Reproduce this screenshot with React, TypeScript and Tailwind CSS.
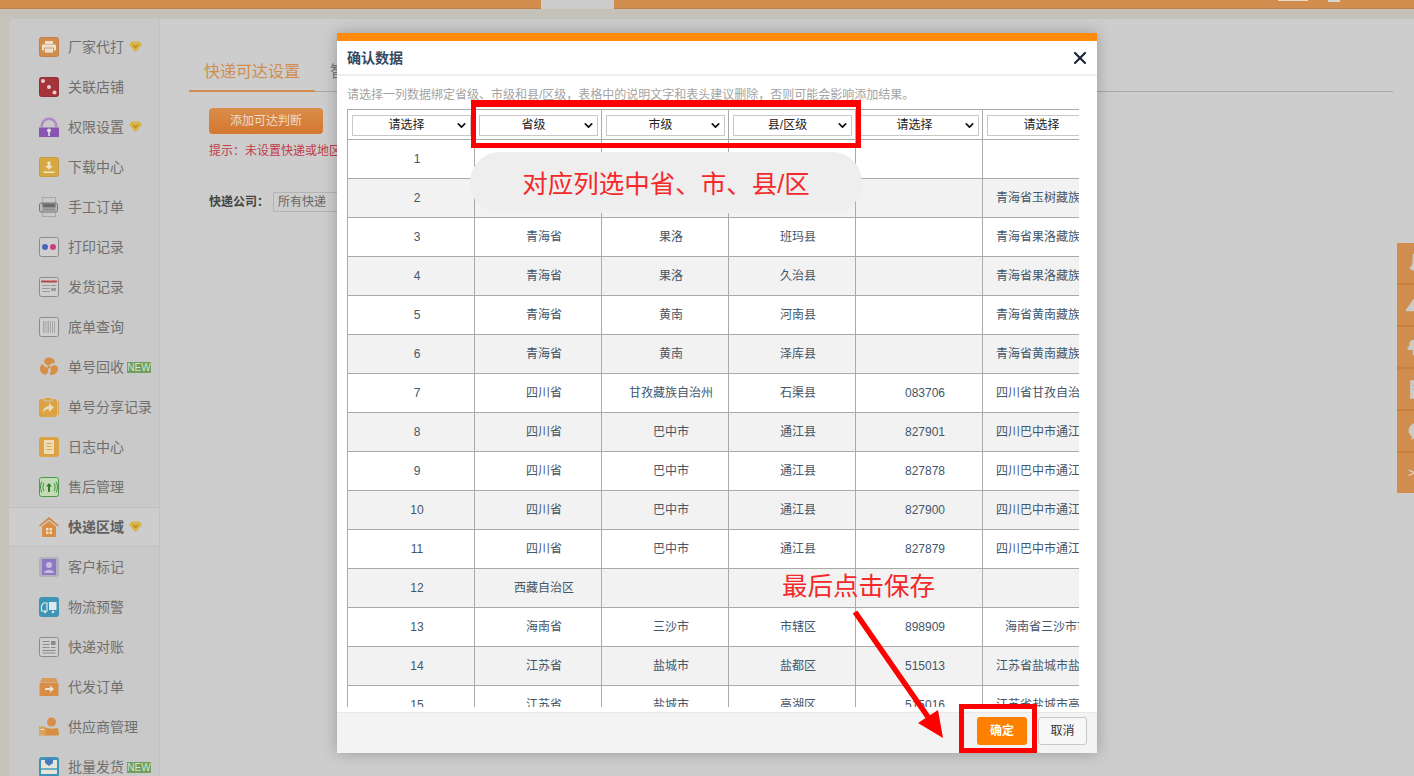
import { ChevronDown, X } from "lucide-react";
import type { ReactNode } from "react";

const FONT = { fontFamily: '"Liberation Sans", "Noto Sans CJK SC", sans-serif' };

const box = (bg: string, children: ReactNode, stroke?: string) => (
  <svg viewBox="0 0 20 20" className="w-5 h-5">
    <rect x="0.5" y="0.5" width="19" height="19" rx="2" fill={bg} stroke={stroke || bg} />
    {children}
  </svg>
);

const lobe = "M10 8.500C6 8 4 5 6 2c2.500-2 7-2 9 1 .5 1 1 2 1 3-2 0-4 0-6 2.500z";

const menuIcons: Record<string, ReactNode> = {
  printer: box(
    "#d08d4e",
    <g>
      <rect x="6" y="4" width="8" height="3" fill="#eee0d0" />
      <rect x="3" y="7.500" width="14" height="6" rx="1" fill="#eee0d0" />
      <rect x="5.500" y="11" width="9" height="5" fill="#eee0d0" stroke="#d08d4e" strokeWidth="0.800" />
    </g>,
    "#c47f48",
  ),
  dice: box("#a5343a", <g fill="#e8d0d0"><circle cx="4" cy="4" r="2" /><circle cx="10" cy="10" r="2" /><circle cx="15.500" cy="15.500" r="2" /></g>, "#8f3136"),
  lock: (
    <svg viewBox="0 0 20 20" className="w-5 h-5">
      <path d="M1.500 10V9a8.500 8.500 0 0 1 17 0v1H16V9a6 6 0 0 0-12 0v1z" fill="#b08ac4" />
      <path d="M0 10.500h20V20H0z" fill="#8a55b0" />
      <circle cx="10" cy="13.500" r="2" fill="#ddd" />
      <rect x="9.200" y="14" width="1.600" height="5" fill="#ddd" />
    </svg>
  ),
  download: box("#d5a843", <path d="M8.500 4.500h3v4.500H14L10 12.500 6 9h2.500zM4.500 14.500h11v1.500h-11z" fill="#efe4c4" />, "#c79a3c"),
  grayPrinter: (
    <svg viewBox="0 0 20 20" className="w-5 h-5">
      <rect x="3.500" y="0.500" width="13" height="19" fill="#c9c9c9" stroke="#a8a8a8" />
      <rect x="0.500" y="6" width="18" height="9" rx="1.500" fill="#bbb" stroke="#777" />
      <rect x="3.500" y="6.500" width="13" height="4" fill="#6a6a6a" />
      <rect x="3.500" y="11.500" width="13" height="2" fill="#8a8a8a" />
    </svg>
  ),
  flickr: box("#cfcfcf", <g><circle cx="6" cy="10" r="3" fill="#4a66b8" /><circle cx="14" cy="10" r="3" fill="#cf3d86" /></g>, "#8b8b8b"),
  calendar: box("#cfcfcf", <g><rect x="2" y="3.500" width="16" height="2" fill="#b9474a" /><path d="M3 8h8v1H3zM3 11h8v1H3zM3 14h8v1H3zM12 8h5v1h-5zM12 11h5v3h-5z" fill="#9a9a9a" /></g>, "#8b8b8b"),
  barcode: box("#cfcfcf", <path d="M4 4h1.500v12H4zM6.500 4h1v12h-1zM8.500 4h1.500v12H8.500zM11 4h1v12h-1zM13 4h1v12h-1zM15 4h1v12h-1z" fill="#a8a8a8" />, "#8b8b8b"),
  recycle: (
    <svg viewBox="0 0 20 20" className="w-5 h-5">
      <g fill="#d98e45">
        <path d={lobe} />
        <path d={lobe} transform="rotate(120 10 10)" />
        <path d={lobe} transform="rotate(240 10 10)" />
      </g>
      <circle cx="10" cy="10" r="1.500" fill="#d98e45" />
    </svg>
  ),
  share: (
    <svg viewBox="0 0 20 20" className="w-5 h-5">
      <rect x="0" y="2" width="18" height="18" rx="2" fill="#dca243" />
      <rect x="5" y="0.500" width="8" height="3.500" rx="1" fill="#dca243" stroke="#c9c9c9" />
      <rect x="18.800" y="4" width="1" height="14" fill="#dca243" />
      <path d="M4 16c0-5 3-7 6-7V6l5 4.500L10 15v-3c-3 0-4.500 1.500-6 4z" fill="#e8dcc0" />
    </svg>
  ),
  notebook: box("#dca243", <g><rect x="5" y="3" width="10" height="14" fill="#ecdcb8" /><path d="M7.500 6h5v1h-5zM7.500 9h5v1h-5zM7.500 12h5v1h-5z" fill="#dca243" /></g>),
  signal: box("#c4dcb6", <g fill="none" stroke="#3d8f3d" strokeWidth="1"><path d="M5 6c-1.500 2.500-1.500 5.500 0 8M3 4.500c-2 3.500-2 7.500 0 11M15 6c1.500 2.500 1.500 5.500 0 8M17 4.500c2 3.500 2 7.500 0 11" /><path d="M10 6l3 3.500h-2V15H9V9.500H7z" fill="#2f7a2f" stroke="none" /></g>, "#4a9a4a"),
  home: (
    <svg viewBox="0 0 20 20" className="w-5 h-5">
      <path d="M10 0 0 8.500l1 1L10 2.500l9 7 1-1z" fill="#d4863e" />
      <path d="M3 9.500 10 4l7 5.500V20H3z" fill="#d98e45" />
      <path d="M7 11h2.500v2.500H7zM10.500 11H13v2.500h-2.500zM7 14.500h2.500V17H7zM10.500 14.500H13V17h-2.500z" fill="#eee0cc" />
    </svg>
  ),
  contact: box("#b3b0bb", <g><rect x="3" y="2" width="14" height="16" fill="#8d76c4" /><circle cx="10" cy="8" r="3" fill="#c7bce0" /><path d="M5 16c0-4 10-4 10 0z" fill="#c7bce0" /></g>, "#b3b0bb"),
  truck: box(
    "#3f94b5",
    <g fill="none" stroke="#dceaf0" strokeWidth="1.200">
      <path d="M2.500 14V9l2-3H8v8z" />
      <rect x="10" y="5" width="7.500" height="8" fill="#dceaf0" stroke="none" />
      <circle cx="6" cy="15" r="1.300" fill="#dceaf0" stroke="none" />
      <circle cx="14" cy="15" r="1.300" fill="#dceaf0" stroke="none" />
    </g>,
  ),
  list: box("#cfcfcf", <path d="M3.500 4h7v1h-7zM3.500 7h7v1h-7zM3.500 10h7v1h-7zM12 4h4.500v4H12zM3.500 13h13v1h-13zM3.500 15.500h13v1h-13zM12 10h4.500v1H12z" fill="#8a8a8a" />, "#8b8b8b"),
  parcel: (
    <svg viewBox="0 0 20 20" className="w-5 h-5">
      <path d="M3 1h14l2 4H1z" fill="#d99a5c" />
      <rect x="0.500" y="5.500" width="19" height="13.500" rx="1.500" fill="#d98e45" />
      <path d="M6 11h5V8.500l4 3.500-4 3.500V13H6z" fill="#eee0cc" />
    </svg>
  ),
  supplier: (
    <svg viewBox="0 0 20 20" className="w-5 h-5">
      <circle cx="12.500" cy="5" r="4.500" fill="#d98e45" />
      <path d="M7 10.500c1 1.500 10 1.500 11 0 1.500 1 2 5 2 8H5c0-3 .5-7 2-8z" fill="#d98e45" />
      <rect x="0" y="9.500" width="6.500" height="9" fill="#dca35a" />
      <path d="M1.500 12h3.500v1H1.500z" fill="#eee0cc" />
    </svg>
  ),
  batch: box("#3f94b5", <g><rect x="2" y="3" width="16" height="14" fill="#e6e6d8" /><path d="M6 2h8v4l-4 3-4-3z" fill="#4c7ac0" /><rect x="2" y="11" width="16" height="2" fill="#6cb0c8" /></g>),
};

const menu = [
  { icon: "printer", label: "厂家代打", gem: true },
  { icon: "dice", label: "关联店铺" },
  { icon: "lock", label: "权限设置", gem: true },
  { icon: "download", label: "下载中心" },
  { icon: "grayPrinter", label: "手工订单" },
  { icon: "flickr", label: "打印记录" },
  { icon: "calendar", label: "发货记录" },
  { icon: "barcode", label: "底单查询" },
  { icon: "recycle", label: "单号回收", isNew: true },
  { icon: "share", label: "单号分享记录" },
  { icon: "notebook", label: "日志中心" },
  { icon: "signal", label: "售后管理" },
  { icon: "home", label: "快递区域", gem: true, active: true },
  { icon: "contact", label: "客户标记" },
  { icon: "truck", label: "物流预警" },
  { icon: "list", label: "快递对账" },
  { icon: "parcel", label: "代发订单" },
  { icon: "supplier", label: "供应商管理" },
  { icon: "batch", label: "批量发货", isNew: true },
];

// rows 1 and 2 sit behind the grey note in the reference, so their middle cells stay empty here
const rows = [
  ["1", "", "", "", "", ""],
  ["2", "", "", "", "", "青海省玉树藏族"],
  ["3", "青海省", "果洛", "班玛县", "", "青海省果洛藏族"],
  ["4", "青海省", "果洛", "久治县", "", "青海省果洛藏族"],
  ["5", "青海省", "黄南", "河南县", "", "青海省黄南藏族"],
  ["6", "青海省", "黄南", "泽库县", "", "青海省黄南藏族"],
  ["7", "四川省", "甘孜藏族自治州", "石渠县", "083706", "四川省甘孜自治"],
  ["8", "四川省", "巴中市", "通江县", "827901", "四川巴中市通江"],
  ["9", "四川省", "巴中市", "通江县", "827878", "四川巴中市通江"],
  ["10", "四川省", "巴中市", "通江县", "827900", "四川巴中市通江"],
  ["11", "四川省", "巴中市", "通江县", "827879", "四川巴中市通江"],
  ["12", "西藏自治区", "", "", "", ""],
  ["13", "海南省", "三沙市", "市辖区", "898909", "海南省三沙市市"],
  ["14", "江苏省", "盐城市", "盐都区", "515013", "江苏省盐城市盐"],
  ["15", "江苏省", "盐城市", "高湖区", "515016", "江苏省盐城市高"],
];

const headers = ["请选择", "省级", "市级", "县/区级", "请选择", "请选择"];

function Gem() {
  return (
    <svg viewBox="0 0 14 12" className="w-[13px] h-3 block">
      <path d="M3 1h8l2 2.500L7 10.500 1 3.500z" fill="#d9b24a" stroke="#d9b24a" strokeWidth="1.600" strokeLinejoin="round" />
      <path d="M4.500 4 7 6.500 9.500 4" fill="none" stroke="#b58a22" strokeWidth="1.400" />
    </svg>
  );
}

function MenuItem({ item }: { item: (typeof menu)[number] }) {
  return (
    <div className="flex items-center h-10 pl-[30px]">
      <div className="w-5 h-5 shrink-0">{menuIcons[item.icon]}</div>
      <span className={`ml-[9px] text-sm whitespace-nowrap ${item.active ? "font-bold text-[#5f5f5f]" : "text-[#6f6f6f]"}`}>
        {item.label}
      </span>
      {item.gem && (
        <span className="ml-[5px]">
          <Gem />
        </span>
      )}
      {item.isNew && (
        <span className="ml-[3px] bg-[#6f9e5f] text-[#d5e4cd] text-[10px] leading-[11px] h-[11px] w-6 text-center">
          NEW
        </span>
      )}
    </div>
  );
}

function Sidebar() {
  return (
    <div className="w-[151px] shrink-0 h-[757px] overflow-hidden rounded-tl-md pt-2 bg-[#c9c9c9] border-r border-[#c2c2c2]">
      {menu.slice(0, 12).map((item) => (
        <MenuItem key={item.label} item={item} />
      ))}
      <div className="border-y border-[#c0c0c0] bg-[#cdcdcd] h-10">
        <div className="-mt-px">
          <MenuItem item={menu[12]} />
        </div>
      </div>
      {menu.slice(13).map((item) => (
        <MenuItem key={item.label} item={item} />
      ))}
    </div>
  );
}

function MainPanel() {
  return (
    <div className="flex-1 min-w-0 pt-[33px] pl-[29px] pr-[21px]">
      <div className="flex h-10 border-b border-[#a8a8a8] text-base">
        <div className="w-[126px] h-10 border-b-2 border-[#d08d4e] text-[#d08d4e] text-center leading-[40px]">快递可达设置</div>
        <div className="pl-[15px] leading-[40px] text-[#777]">智能设置</div>
      </div>
      <div className="pl-5">
        <button className="mt-4 w-[114px] h-[26px] rounded-sm text-xs text-[#eeddc8] bg-gradient-to-b from-[#d98e4a] to-[#d5762f]">添加可达判断</button>
        <div className="mt-[10px] text-xs leading-[14px] text-[#c03a4a] whitespace-nowrap">提示：未设置快递或地区可达判断</div>
        <div className="mt-[34px] flex items-center text-xs">
          <span className="font-bold text-[#444] w-[64px]">快递公司：</span>
          <div className="w-[90px] h-5 border border-[#b4b4b4] pl-1 leading-[18px] text-[#666]">所有快递</div>
        </div>
      </div>
    </div>
  );
}

function FloatBar() {
  const icons = [
    <path key="a" d="M8 4c6-5 12 0 12 4v14c-5 4-14 2-16-2 3-1 4-4 4-16z" />,
    <path key="b" d="M12 3l10 17v2H0v-2z" />,
    <path key="c" d="M8 6h12v5h-6v3H4V11c0-3 2-5 4-5zM2 14h20v10H8v-6H2z" />,
    <path key="d" d="M5 4h18v22H5zM9 9v2h8V9zM9 14v2h8v-2z" fillRule="evenodd" />,
    <path key="e" d="M16 4C8 4 3 9 3 14c0 3 2 5 4 7l-1 4 6-3c3 0 6 0 8-1z" />,
  ];
  return (
    <div className="absolute right-0 top-[243px] w-[17px] h-[250px] bg-[#d08d4e] flex flex-col overflow-hidden">
      {icons.map((icon, i) => (
        <div key={i} className="h-[42px] shrink-0 border-b-2 border-[#c9803f] flex items-center pl-[9px]">
          <svg viewBox="0 0 24 30" className="w-5 h-[25px] shrink-0 fill-[#cdcbc8]">
            {icon}
          </svg>
        </div>
      ))}
      <div className="flex-1 pl-[11px] text-xs text-[#e6dccf] leading-[40px]">&gt;</div>
    </div>
  );
}

function ColumnSelect({ label }: { label: string }) {
  return (
    <div className="mx-auto mt-px w-[119px] h-[21px] border border-[#c8c8c8] bg-white relative text-center leading-[19px] text-xs text-[#222] pr-[9px]">
      {label}
      <ChevronDown className="absolute right-[2px] top-[3px] w-[13px] h-[13px] text-[#111]" strokeWidth={3} />
    </div>
  );
}

function ConfirmModal() {
  return (
    <div className="absolute left-[337px] top-[33px] w-[760px] h-[720px] bg-white border-t-[8px] border-[#ff8a0c] shadow-[0_0_14px_rgba(0,0,0,0.25)] flex flex-col">
      <div className="h-[35px] shrink-0 border-b-2 border-[#eeeeee] flex items-center justify-between pl-[10px] pr-[7px]">
        <span className="text-sm font-bold text-[#34495e]">确认数据</span>
        <X className="w-5 h-5 text-[#1d2733]" strokeWidth={2.6} />
      </div>
      <div className="h-[33px] shrink-0 pl-[10px] pt-[11px] text-xs leading-[16px] text-[#a3a3a3] whitespace-nowrap">
        请选择一列数据绑定省级、市级和县/区级，表格中的说明文字和表头建议删除，否则可能会影响添加结果。
      </div>
      <div className="ml-[10px] w-[732px] h-[598px] shrink-0 overflow-hidden">
        <table className="w-[763px] table-fixed border-collapse border border-[#aaaaaa] text-xs text-[#44566a]">
          <thead>
            <tr className="h-[30px]">
              {headers.map((h, i) => (
                <th key={i} className="border border-[#aaaaaa] font-normal p-0">
                  <ColumnSelect label={h} />
                </th>
              ))}
            </tr>
          </thead>
          <tbody>
            {rows.map((row, i) => (
              <tr key={row[0]} className={`h-[39px] ${i % 2 === 1 ? "bg-[#f2f2f2]" : "bg-white"}`}>
                {row.map((cell, j) => (
                  <td
                    key={j}
                    className={`border border-[#aaaaaa] p-0 whitespace-nowrap overflow-hidden ${j === 5 ? (row[0] === "13" ? "text-left pl-[22px]" : "text-left pl-[13px]") : "text-center pl-3"}`}
                  >
                    {cell}
                  </td>
                ))}
              </tr>
            ))}
          </tbody>
        </table>
      </div>
      <div className="mt-[5px] flex-1 bg-[#f3f3f3] border-t border-[#e8e8e8] flex items-start pt-1 justify-end pr-[10px] gap-[11px] text-xs">
        <button className="w-[50px] h-7 rounded-[3px] bg-[#ff7f00] text-white font-bold">确定</button>
        <button className="w-[49px] h-7 rounded-[3px] border border-[#c8c8c8] bg-[#f7f7f7] text-[#333]">取消</button>
      </div>
    </div>
  );
}

function Annotations() {
  return (
    <>
      <div className="absolute left-[471px] top-[100px] w-[390px] h-[48px] border-[5px] border-t-[7px] border-[#ff0000]" />
      <div className="absolute left-[470px] top-[152px] w-[392px] h-[61px] pt-1 rounded-[30px] bg-[#eeeeee] flex items-center justify-center text-[25.5px] text-[#f5282a] whitespace-nowrap">
        对应列选中省、市、县/区
      </div>
      <div className="absolute left-[782px] top-[570px] text-[25.5px] leading-[32px] text-[#f5282a] whitespace-nowrap">最后点击保存</div>
      <svg className="absolute left-[840px] top-[600px] w-[120px] h-[150px]" viewBox="0 0 120 150">
        <path d="M15 12 88 117" stroke="#ff0000" strokeWidth="5.500" fill="none" />
        <path d="M103 138 78 123 98 110z" fill="#ff0000" />
      </svg>
      <div className="absolute left-[959px] top-[704px] w-[78px] h-[49px] border-[5px] border-[#ff0000]" />
    </>
  );
}

export default function App() {
  return (
    <div className="relative w-[1414px] h-[776px] overflow-hidden bg-[#c4c2b9]" style={FONT}>
      <div className="h-[9px] bg-[#d08d4e] border-b border-[#c07f45] flex">
        <div className="ml-[541px] w-[73px] h-[9px] bg-[#cccccc]" />
        <div className="ml-[664px] w-[30px] h-px bg-[#e8dccb]" />
        <div className="ml-5 w-3 h-0.5 bg-[#d8d4ce]" />
      </div>
      <div className="pt-[10px] pl-[9px]">
        <div className="flex h-[757px] bg-[#cdcdcd] rounded-tl-md">
          <Sidebar />
          <MainPanel />
        </div>
      </div>
      <FloatBar />
      <ConfirmModal />
      <Annotations />
    </div>
  );
}
